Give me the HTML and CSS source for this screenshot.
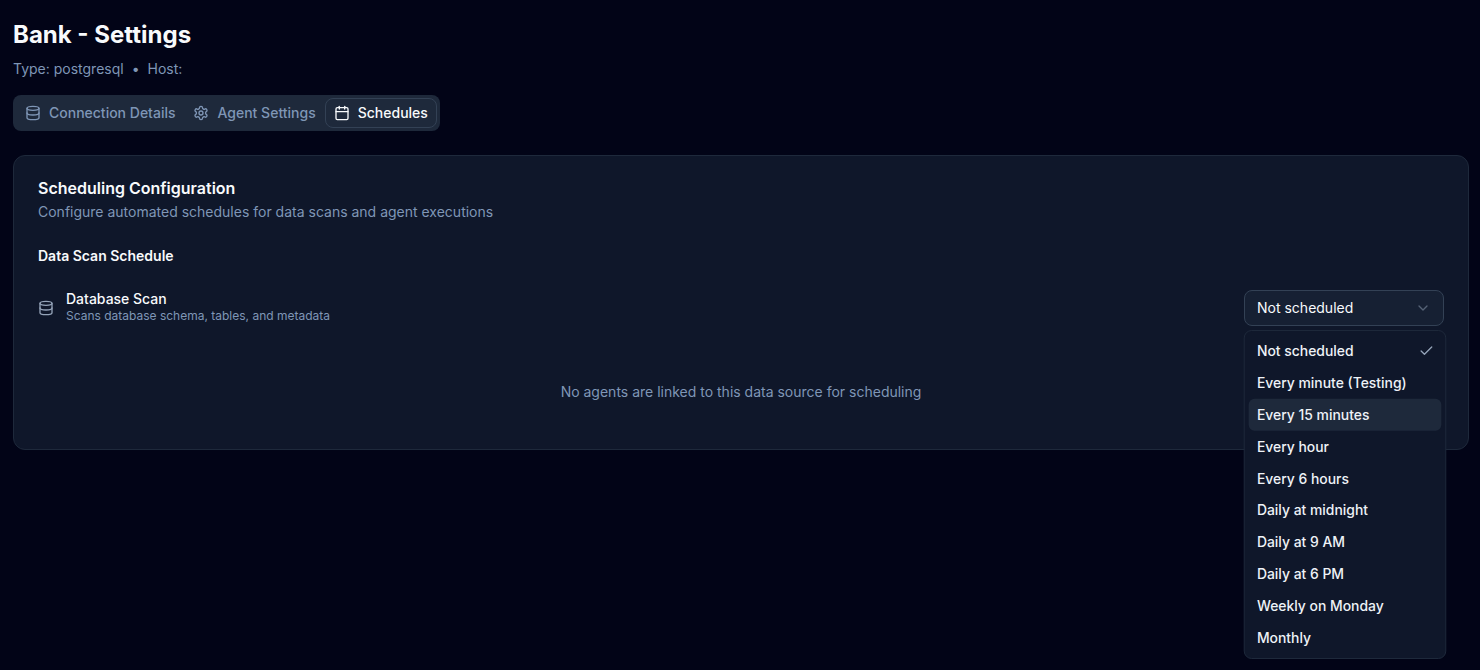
FILE: index.html
```html
<!DOCTYPE html>
<html lang="en">
<head>
<meta charset="utf-8">
<title>Bank - Settings</title>
<link rel="stylesheet" href="styles.css">
</head>
<body>
<main class="page">
  <h1 class="title">Bank - Settings</h1>
  <p class="subtitle"><span>Type: postgresql</span><span class="dot">•</span><span>Host:</span></p>
  <nav class="tabs">
    <div class="tab">
      <svg class="icon" viewBox="0 0 24 24"><ellipse cx="12" cy="5" rx="9" ry="3"/><path d="M3 5v14a9 3 0 0 0 18 0V5"/><path d="M3 12a9 3 0 0 0 18 0"/></svg>
      <span>Connection Details</span>
    </div>
    <div class="tab">
      <svg class="icon" viewBox="0 0 24 24"><path d="M12.22 2h-.44a2 2 0 0 0-2 2v.18a2 2 0 0 1-1 1.73l-.43.25a2 2 0 0 1-2 0l-.15-.08a2 2 0 0 0-2.73.73l-.22.38a2 2 0 0 0 .73 2.73l.15.1a2 2 0 0 1 1 1.72v.51a2 2 0 0 1-1 1.74l-.15.09a2 2 0 0 0-.73 2.73l.22.38a2 2 0 0 0 2.73.73l.15-.08a2 2 0 0 1 2 0l.43.25a2 2 0 0 1 1 1.73V20a2 2 0 0 0 2 2h.44a2 2 0 0 0 2-2v-.18a2 2 0 0 1 1-1.73l.43-.25a2 2 0 0 1 2 0l.15.08a2 2 0 0 0 2.73-.73l.22-.39a2 2 0 0 0-.73-2.73l-.15-.08a2 2 0 0 1-1-1.74v-.5a2 2 0 0 1 1-1.74l.15-.09a2 2 0 0 0 .73-2.73l-.22-.38a2 2 0 0 0-2.73-.73l-.15.08a2 2 0 0 1-2 0l-.43-.25a2 2 0 0 1-1-1.73V4a2 2 0 0 0-2-2z"/><circle cx="12" cy="12" r="3"/></svg>
      <span>Agent Settings</span>
    </div>
    <div class="tab tab-active">
      <svg class="icon" viewBox="0 0 24 24"><path d="M8 2v4"/><path d="M16 2v4"/><rect x="3" y="4" width="18" height="18" rx="2"/><path d="M3 10h18"/></svg>
      <span>Schedules</span>
    </div>
  </nav>
  <section class="card">
    <h2 class="card-title">Scheduling Configuration</h2>
    <p class="card-desc">Configure automated schedules for data scans and agent executions</p>
    <h3 class="section-title">Data Scan Schedule</h3>
    <div class="row">
      <div class="row-info">
        <svg class="icon row-icon" viewBox="0 0 24 24"><ellipse cx="12" cy="5" rx="9" ry="3"/><path d="M3 5v14a9 3 0 0 0 18 0V5"/><path d="M3 12a9 3 0 0 0 18 0"/></svg>
        <div class="row-text">
          <div class="row-name">Database Scan</div>
          <div class="row-desc">Scans database schema, tables, and metadata</div>
        </div>
      </div>
      <div class="select-wrap">
        <div class="select">
          <span>Not scheduled</span>
          <svg class="chevron" viewBox="0 0 24 24"><path d="m6 9 6 6 6-6"/></svg>
        </div>
        <ul class="menu">
          <li class="item">Not scheduled<svg class="check" viewBox="0 0 24 24"><path d="M20 6 9 17l-5-5"/></svg></li>
          <li class="item">Every minute (Testing)</li>
          <li class="item item-hover">Every 15 minutes</li>
          <li class="item">Every hour</li>
          <li class="item">Every 6 hours</li>
          <li class="item">Daily at midnight</li>
          <li class="item">Daily at 9 AM</li>
          <li class="item">Daily at 6 PM</li>
          <li class="item">Weekly on Monday</li>
          <li class="item">Monthly</li>
        </ul>
      </div>
    </div>
    <p class="empty">No agents are linked to this data source for scheduling</p>
  </section>
</main>
</body>
</html>
```
FILE: styles.css
```css
* { box-sizing: border-box; }
html, body { height: 100%; }
body {
  margin: 0;
  background: #020417;
  color: #f8fafc;
  font-family: Inter, "Liberation Sans", sans-serif;
  overflow: hidden;
}
.page { padding: 19px 11px 0 13px; }
.title { margin: 0; font-size: 24px; line-height: 32px; font-weight: 700; }
.subtitle {
  margin: 8px 0 0;
  display: flex;
  gap: 8px;
  font-size: 14px;
  line-height: 20px;
  color: #7f96b6;
}
.tabs {
  display: inline-flex;
  margin-top: 16px;
  height: 36px;
  padding: 3px;
  align-items: center;
  background: #1e293b;
  border-radius: 8px;
}
.tab {
  display: flex;
  align-items: center;
  gap: 8px;
  height: 30px;
  padding: 0 8px;
  font-size: 14px;
  line-height: 20px;
  font-weight: 500;
  color: #7f96b6;
  border: 1px solid transparent;
  border-radius: 8px;
}
.tab-active {
  color: #f8fafc;
  background: #1e293b;
  border-color: #334155;
}
.icon {
  width: 16px;
  height: 16px;
  flex: none;
  fill: none;
  stroke: currentColor;
  stroke-width: 2;
  stroke-linecap: round;
  stroke-linejoin: round;
}
.card {
  margin-top: 24px;
  padding: 24px 24px 23px;
  background: #0f172a;
  border: 1px solid #1e293b;
  border-radius: 12px;
}
.card-title { margin: 0; font-size: 16px; line-height: 16px; font-weight: 600; }
.card-desc { margin: 6px 0 0; font-size: 14px; line-height: 20px; color: #7f96b6; }
.section-title { margin: 24px 0 0; font-size: 14px; line-height: 20px; font-weight: 600; }
.row {
  display: flex;
  justify-content: space-between;
  align-items: center;
  margin-top: 24px;
  height: 36px;
}
.row-info { display: flex; align-items: center; gap: 12px; }
.row-icon { color: #94a3b8; }
.row-text { margin-bottom: 4px; }
.row-name { font-size: 14px; line-height: 19px; font-weight: 500; }
.row-desc { font-size: 12px; line-height: 16px; color: #7f96b6; }
.select-wrap { position: relative; width: 200px; }
.select {
  display: flex;
  align-items: center;
  justify-content: space-between;
  height: 36px;
  padding: 0 12px;
  font-size: 14px;
  line-height: 20px;
  background: #1e293b80;
  border: 1px solid #334155;
  border-radius: 8px;
}
.chevron, .check {
  width: 16px;
  height: 16px;
  fill: none;
  stroke-width: 2;
  stroke-linecap: round;
  stroke-linejoin: round;
}
.chevron { stroke: #94a3b8; opacity: .5; }
.check { stroke: #94a3b8; }
.menu {
  position: absolute;
  top: 40px;
  left: -.75px;
  width: 203.5px;
  margin: 0;
  padding: 4px;
  list-style: none;
  background: #0f172a;
  border: 1px solid #1e293b;
  border-radius: 8px;
  transform: scale(.993, .997);
  transform-origin: top center;
}
.item {
  display: flex;
  align-items: center;
  justify-content: space-between;
  height: 32px;
  padding: 0 7px 0 8.3px;
  font-size: 14px;
  line-height: 20px;
  font-weight: 500;
  color: #eef2f7;
  border-radius: 6px;
}
.item-hover { background: #1e293b; }
.empty {
  margin: 56px 0 24px;
  text-align: center;
  font-size: 14px;
  line-height: 20px;
  color: #7f96b6;
}
```
